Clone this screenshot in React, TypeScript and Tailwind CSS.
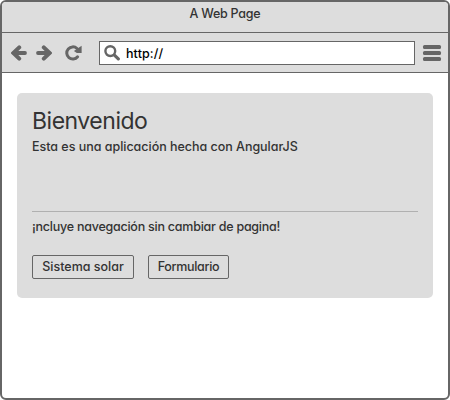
import React from "react";

function Arrow({ className = "" }: { className?: string }) {
  return (
    <svg viewBox="0 0 16 16" className={`h-4 w-4 shrink-0 ${className}`} fill="none" stroke="#666" strokeLinecap="round">
      <path d="M8.2 2.4 L2.4 8 L8.2 13.6" strokeWidth="4" />
      <path d="M3 8 H14" strokeWidth="3.8" />
    </svg>
  );
}

function Reload() {
  return (
    <svg viewBox="0 0 17 16" className="ml-[13px] h-4 w-[17px] shrink-0">
      <path d="M12 3.5 A6.1 6.1 0 1 0 12.6 11.8" fill="none" stroke="#666" strokeWidth="3" strokeLinecap="round" />
      <path d="M16.6 0.8 V8 H11.8 L8.9 6 Z" fill="#666" />
    </svg>
  );
}

function Search() {
  return (
    <svg viewBox="0 0 16 16" className="h-4 w-4 shrink-0" fill="none" stroke="#666">
      <circle cx="6.3" cy="6.1" r="4.9" strokeWidth="2.4" />
      <path d="M10.4 10.2 L14.3 13.9" strokeWidth="3.2" strokeLinecap="round" />
    </svg>
  );
}

function Button({ label, className }: { label: string; className: string }) {
  return (
    <button className={`flex h-6 items-center justify-center whitespace-nowrap rounded-[2px] border border-[#666] pb-px text-[12.5px] ${className}`}>
      {label}
    </button>
  );
}

export default function App() {
  return (
    <div className="flex h-[400px] w-[450px] flex-col overflow-hidden rounded-[6px] border-2 border-[#666] bg-white font-['Inter','Noto_Sans',sans-serif] text-[12.5px] font-medium leading-4 text-[#333] [font-feature-settings:'cv11']">
      <header className="flex h-[31px] shrink-0 justify-center border-b border-[#666] bg-[#ddd] pt-1">
        <span className="whitespace-nowrap tracking-[-0.25px]">A Web Page</span>
      </header>
      <nav className="flex h-10 shrink-0 items-center border-b border-[#666] bg-[#ddd] pl-[9px]">
        <Arrow />
        <Arrow className="ml-[9px] rotate-180" />
        <Reload />
        <div className="ml-[17px] flex h-6 w-[316px] shrink-0 items-center border border-[#666] bg-white pl-1 text-black">
          <Search />
          <span className="ml-[6px] pt-0.5 tracking-[0.1px]">http://</span>
        </div>
        <div className="ml-2 flex w-[18px] flex-col gap-[2px]">
          <i className="h-1 rounded-[1.5px] bg-[#666]" />
          <i className="h-1 rounded-[1.5px] bg-[#666]" />
          <i className="h-1 rounded-[1.5px] bg-[#666]" />
        </div>
      </nav>
      <main className="mx-[15px] mt-5 h-[205px] rounded-[5px] bg-[#ddd] px-[15px] pt-[14px]">
        <h1 className="h-[30px] whitespace-nowrap text-[23px] font-normal leading-7 tracking-[-0.48px]">Bienvenido</h1>
        <p className="h-[74px] whitespace-nowrap pt-0.5 tracking-[-0.02px]">Esta es una aplicación hecha con AngularJS</p>
        <p className="whitespace-nowrap border-t border-[#b0b0b0] pt-[7px] tracking-[-0.24px]">¡ncluye navegación sin cambiar de pagina!</p>
        <div className="mt-5 flex gap-[14px]">
          <Button label="Sistema solar" className="w-[102px]" />
          <Button label="Formulario" className="w-[81px] tracking-[-0.3px]" />
        </div>
      </main>
    </div>
  );
}
